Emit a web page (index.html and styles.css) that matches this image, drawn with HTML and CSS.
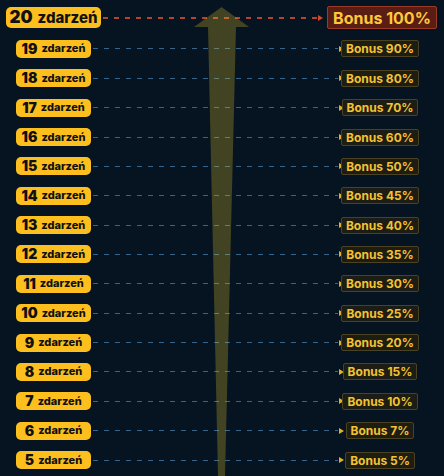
FILE: index.html
```html
<!DOCTYPE html>
<html lang="pl">
<head>
<meta charset="utf-8">
<link rel="stylesheet" href="styles.css">
</head>
<body>
<div class="ladder">
  <div class="row row-top">
    <div class="pill pill-top"><span class="num">20</span><span class="word">zdarzeń</span></div>
    <div class="line line-red"></div>
    <div class="tri tri-red"></div>
    <div class="cell cell-top"><div class="bonus bonus-top">Bonus 100%</div></div>
  </div>
  <div class="row"><div class="pill"><span class="num">19</span><span class="word">zdarzeń</span></div><div class="line"></div><div class="tri"></div><div class="cell"><div class="bonus">Bonus 90%</div></div></div>
  <div class="row"><div class="pill"><span class="num">18</span><span class="word">zdarzeń</span></div><div class="line"></div><div class="tri"></div><div class="cell"><div class="bonus">Bonus 80%</div></div></div>
  <div class="row"><div class="pill"><span class="num">17</span><span class="word">zdarzeń</span></div><div class="line"></div><div class="tri"></div><div class="cell"><div class="bonus">Bonus 70%</div></div></div>
  <div class="row"><div class="pill"><span class="num">16</span><span class="word">zdarzeń</span></div><div class="line"></div><div class="tri"></div><div class="cell"><div class="bonus">Bonus 60%</div></div></div>
  <div class="row"><div class="pill"><span class="num">15</span><span class="word">zdarzeń</span></div><div class="line"></div><div class="tri"></div><div class="cell"><div class="bonus">Bonus 50%</div></div></div>
  <div class="row"><div class="pill"><span class="num">14</span><span class="word">zdarzeń</span></div><div class="line"></div><div class="tri"></div><div class="cell"><div class="bonus">Bonus 45%</div></div></div>
  <div class="row"><div class="pill"><span class="num">13</span><span class="word">zdarzeń</span></div><div class="line"></div><div class="tri"></div><div class="cell"><div class="bonus">Bonus 40%</div></div></div>
  <div class="row"><div class="pill"><span class="num">12</span><span class="word">zdarzeń</span></div><div class="line"></div><div class="tri"></div><div class="cell"><div class="bonus">Bonus 35%</div></div></div>
  <div class="row"><div class="pill"><span class="num">11</span><span class="word">zdarzeń</span></div><div class="line"></div><div class="tri"></div><div class="cell"><div class="bonus">Bonus 30%</div></div></div>
  <div class="row"><div class="pill"><span class="num">10</span><span class="word">zdarzeń</span></div><div class="line"></div><div class="tri"></div><div class="cell"><div class="bonus">Bonus 25%</div></div></div>
  <div class="row"><div class="pill"><span class="num">9</span><span class="word">zdarzeń</span></div><div class="line"></div><div class="tri"></div><div class="cell"><div class="bonus">Bonus 20%</div></div></div>
  <div class="row"><div class="pill"><span class="num">8</span><span class="word">zdarzeń</span></div><div class="line"></div><div class="tri"></div><div class="cell"><div class="bonus">Bonus 15%</div></div></div>
  <div class="row"><div class="pill"><span class="num">7</span><span class="word">zdarzeń</span></div><div class="line"></div><div class="tri"></div><div class="cell"><div class="bonus">Bonus 10%</div></div></div>
  <div class="row"><div class="pill"><span class="num">6</span><span class="word">zdarzeń</span></div><div class="line"></div><div class="tri"></div><div class="cell"><div class="bonus">Bonus 7%</div></div></div>
  <div class="row"><div class="pill"><span class="num">5</span><span class="word">zdarzeń</span></div><div class="line"></div><div class="tri"></div><div class="cell"><div class="bonus">Bonus 5%</div></div></div>

  <svg class="arrow" width="444" height="476" viewBox="0 0 444 476" aria-hidden="true">
    <polygon points="221.5,7 194,27 208,27 218,476 225,476 236,27 249,27"/>
  </svg>
</div>
</body>
</html>
```

FILE: styles.css
```css
html, body {
  margin: 0;
  padding: 0;
  background: #061321;
}

body {
  width: 444px;
  height: 476px;
  overflow: hidden;
  font-family: Inter, "Noto Sans", "DejaVu Sans", sans-serif;
}

.ladder {
  position: relative;
  display: flex;
  flex-direction: column;
  padding-top: 1px;
  width: 444px;
  height: 476px;
  box-sizing: border-box;
}

.row {
  display: flex;
  align-items: center;
  height: 29.36px;
  flex: none;
  padding-left: 16px;
  padding-right: 29px;
}

.row-top {
  height: 33.3px;
  padding-left: 6px;
  padding-right: 7px;
}

.pill {
  width: 75px;
  height: 18px;
  box-sizing: border-box;
  background: #fcbf1e;
  border-radius: 5px;
  display: flex;
  align-items: center;
  justify-content: center;
  gap: 4px;
  color: #111111;
  font-weight: 900;
}

.pill .num {
  font-size: 14px;
  line-height: 1;
}

.pill .word {
  font-size: 11px;
  font-weight: 800;
  line-height: 1;
}

.pill-top {
  width: 95px;
  height: 21px;
  gap: 5px;
}

.pill-top .num {
  font-size: 17px;
}

.pill-top .word {
  font-size: 15px;
}

.line {
  flex: 1;
  height: 1px;
  margin-left: 2px;
  margin-right: 1px;
  background: repeating-linear-gradient(90deg, #36648a 0 5px, transparent 5px 11px);
}

.line-red {
  height: 2px;
  background: repeating-linear-gradient(90deg, #b8432c 0 5px, transparent 5px 11px);
}

.tri {
  width: 0;
  height: 0;
  border-top: 3px solid transparent;
  border-bottom: 3px solid transparent;
  border-left: 5px solid #e3b222;
  margin-right: 1px;
}

.tri-red {
  border-left-color: #d4472e;
  margin-right: 4px;
}

.cell {
  width: 70px;
  display: flex;
  justify-content: center;
}

.cell-top {
  width: 110px;
}

.bonus {
  flex: none;
  height: 17px;
  box-sizing: border-box;
  padding: 0 4px;
  display: flex;
  align-items: center;
  background: #1e1d14;
  border: 1px solid #4b4223;
  border-radius: 2px;
  color: #f2c232;
  font-size: 12px;
  font-weight: 700;
  white-space: nowrap;
}

.bonus-top {
  width: 110px;
  height: 23px;
  justify-content: center;
  background: #5a1d14;
  border-color: #9b3a26;
  color: #ffc83a;
  font-size: 16px;
}

.arrow {
  position: absolute;
  left: 0;
  top: 0;
  pointer-events: none;
}

.arrow polygon {
  fill: rgba(226, 200, 40, 0.27);
}
```
